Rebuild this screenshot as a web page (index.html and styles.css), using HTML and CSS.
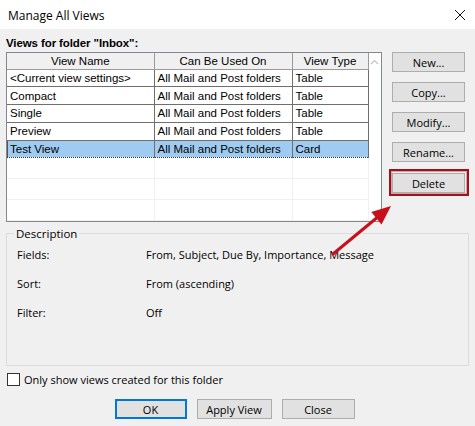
FILE: index.html
```html
<!DOCTYPE html>
<html>
<head>
<meta charset="utf-8">
<link rel="stylesheet" href="styles.css">
</head>
<body>
<div class="dialog">
  <div class="titlebar">
    <span class="title">Manage All Views</span>
    <svg class="close-x" width="12" height="12" viewBox="0 0 12 12"><path d="M1 1 L11 11 M11 1 L1 11" stroke="#111" stroke-width="1" fill="none"/></svg>
  </div>
  <div class="content">
    <div class="views-label">Views for folder "Inbox":</div>
    <div class="top-row">
      <div class="list">
        <table class="grid">
          <colgroup><col class="c1"><col class="c2"><col class="c3"></colgroup>
          <thead>
            <tr><th>View Name</th><th>Can Be Used On</th><th>View Type</th></tr>
          </thead>
          <tbody>
            <tr><td>&lt;Current view settings&gt;</td><td>All Mail and Post folders</td><td>Table</td></tr>
            <tr><td>Compact</td><td>All Mail and Post folders</td><td>Table</td></tr>
            <tr><td>Single</td><td>All Mail and Post folders</td><td>Table</td></tr>
            <tr><td>Preview</td><td>All Mail and Post folders</td><td>Table</td></tr>
            <tr class="sel"><td>Test View</td><td>All Mail and Post folders</td><td>Card</td></tr>
            <tr class="empty"><td></td><td></td><td></td></tr>
            <tr class="empty"><td></td><td></td><td></td></tr>
            <tr class="empty"><td></td><td></td><td></td></tr>
          </tbody>
        </table>
        <div class="scroll">
          <svg width="9" height="6" viewBox="0 0 9 6"><path d="M1 5 L4.5 1.5 L8 5" stroke="#c4c4c4" stroke-width="1.2" fill="none"/></svg>
        </div>
      </div>
      <div class="side-buttons">
        <button class="btn">New...</button>
        <button class="btn">Copy...</button>
        <button class="btn">Modify...</button>
        <button class="btn">Rename...</button>
        <div class="highlight"><button class="btn">Delete</button></div>
      </div>
    </div>
    <fieldset class="desc">
      <legend>Description</legend>
      <div class="desc-row"><span class="k">Fields:</span><span class="v">From, Subject, Due By, Importance, Message</span></div>
      <div class="desc-row"><span class="k">Sort:</span><span class="v">From (ascending)</span></div>
      <div class="desc-row"><span class="k">Filter:</span><span class="v">Off</span></div>
    </fieldset>
    <label class="check"><span class="box"></span>Only show views created for this folder</label>
    <div class="bottom-buttons">
      <button class="btn ok">OK</button>
      <button class="btn apply">Apply View</button>
      <button class="btn">Close</button>
    </div>
  </div>
  <svg class="arrow" width="80" height="64" viewBox="0 0 80 64">
    <line x1="8" y1="54" x2="54" y2="16" stroke="#c8101a" stroke-width="3" stroke-linecap="round"/>
    <polygon points="66,6 56.5,24.4 46.3,12" fill="#c8101a"/>
  </svg>
</div>
</body>
</html>
```

FILE: styles.css
```css
* { box-sizing: border-box; }
html, body { margin: 0; padding: 0; }
body {
  width: 475px;
  height: 426px;
  overflow: hidden;
  background: #f0f0f0;
  font-family: "Open Sans", "Noto Sans", sans-serif;
  font-size: 11px;
  color: #000;
}
.dialog {
  position: relative;
  width: 475px;
  height: 426px;
}
.titlebar {
  height: 29px;
  background: #fff;
  display: flex;
  align-items: center;
  justify-content: space-between;
  padding: 0 8px 0 8px;
}
.title {
  font-size: 12px;
  margin-top: 1px;
}
.close-x { margin-right: 1px; margin-top: 0; }
.content {
  padding: 0 6px;
}
.views-label {
  font-family: "Liberation Sans", Arial, sans-serif;
  font-weight: bold;
  font-size: 11.5px;
  height: 23px;
  padding-top: 8px;
  letter-spacing: -0.1px;
}
.top-row {
  display: flex;
  align-items: flex-start;
}
.list {
  width: 380px;
  height: 170px;
  background: #fff;
  border: 1px solid #828790;
  display: flex;
  overflow: hidden;
}
.grid {
  width: 361px;
  border-collapse: collapse;
  table-layout: fixed;
  font-family: "Liberation Sans", Arial, sans-serif;
  font-size: 11.5px;
}
.c1 { width: 147px; }
.c2 { width: 138px; }
.c3 { width: 76px; }
.grid th {
  height: 16px;
  font-weight: normal;
  background: #f0f0f0;
  border: 1px solid #9a9a9a;
  border-top: none;
  padding: 0;
  text-align: center;
}
.grid th:first-child { border-left: none; }
.grid td {
  height: 17px;
  padding: 0 0 0 3px;
  border-right: 1px solid #6f6f6f;
  border-bottom: 1px solid #6f6f6f;
  white-space: nowrap;
  overflow: hidden;
}
.grid tr.sel td {
  background: #9fcbf0;
  border-top: 1px dotted #333;
  border-bottom: 1px dotted #333;
}
.grid tr.sel td:first-child { box-shadow: inset 1px 0 0 #555; }
.grid tr.empty td {
  height: 20px;
  border-right: 1px solid #f0f0f0;
  border-bottom: 1px solid #f0f0f0;
}
.scroll {
  flex: 1;
  display: flex;
  justify-content: center;
  padding-top: 6px;
}
.side-buttons {
  display: flex;
  flex-direction: column;
  gap: 10px;
  margin-left: 10px;
  margin-top: 0;
}
.btn {
  width: 73px;
  height: 20px;
  background: #e1e1e1;
  border: 1px solid #adadad;
  font-family: "Open Sans", "Noto Sans", sans-serif;
  font-size: 11px;
  color: #000;
  padding: 0;
  margin: 0;
  line-height: 17px;
}
.highlight {
  width: 80px;
  height: 27px;
  margin: -3px 0 0 -3px;
  border: 2px solid #a01219;
  box-shadow: inset 0 0 0 1px #d9a0a3;
  padding: 2px 0 0 1px;
}
.desc {
  margin: 4px 0 0 0;
  padding: 0 0 0 10px;
  border: 1px solid #dcdcdc;
  height: 140px;
  width: 463px;
}
.desc legend {
  font-size: 11.5px;
  padding: 0 2px;
  margin-left: -3px;
}
.desc-row {
  display: flex;
  height: 29px;
  align-items: center;
}
.desc-row:first-of-type { margin-top: -1px; }
.desc .k { width: 129px; }
.check {
  display: flex;
  align-items: center;
  margin-top: 6px;
  height: 14px;
  font-size: 11px;
}
.box {
  width: 13px;
  height: 13px;
  border: 1px solid #333;
  background: #fff;
  margin-right: 4px;
  margin-left: 1px;
}
.bottom-buttons {
  display: flex;
  justify-content: center;
  gap: 10px;
  margin-top: 13px;
  padding-right: 6px;
}
.ok {
  width: 72px;
  border: 2px solid #0078d7;
}
.apply { width: 75px; }
.arrow {
  position: absolute;
  left: 325px;
  top: 200px;
}
```
